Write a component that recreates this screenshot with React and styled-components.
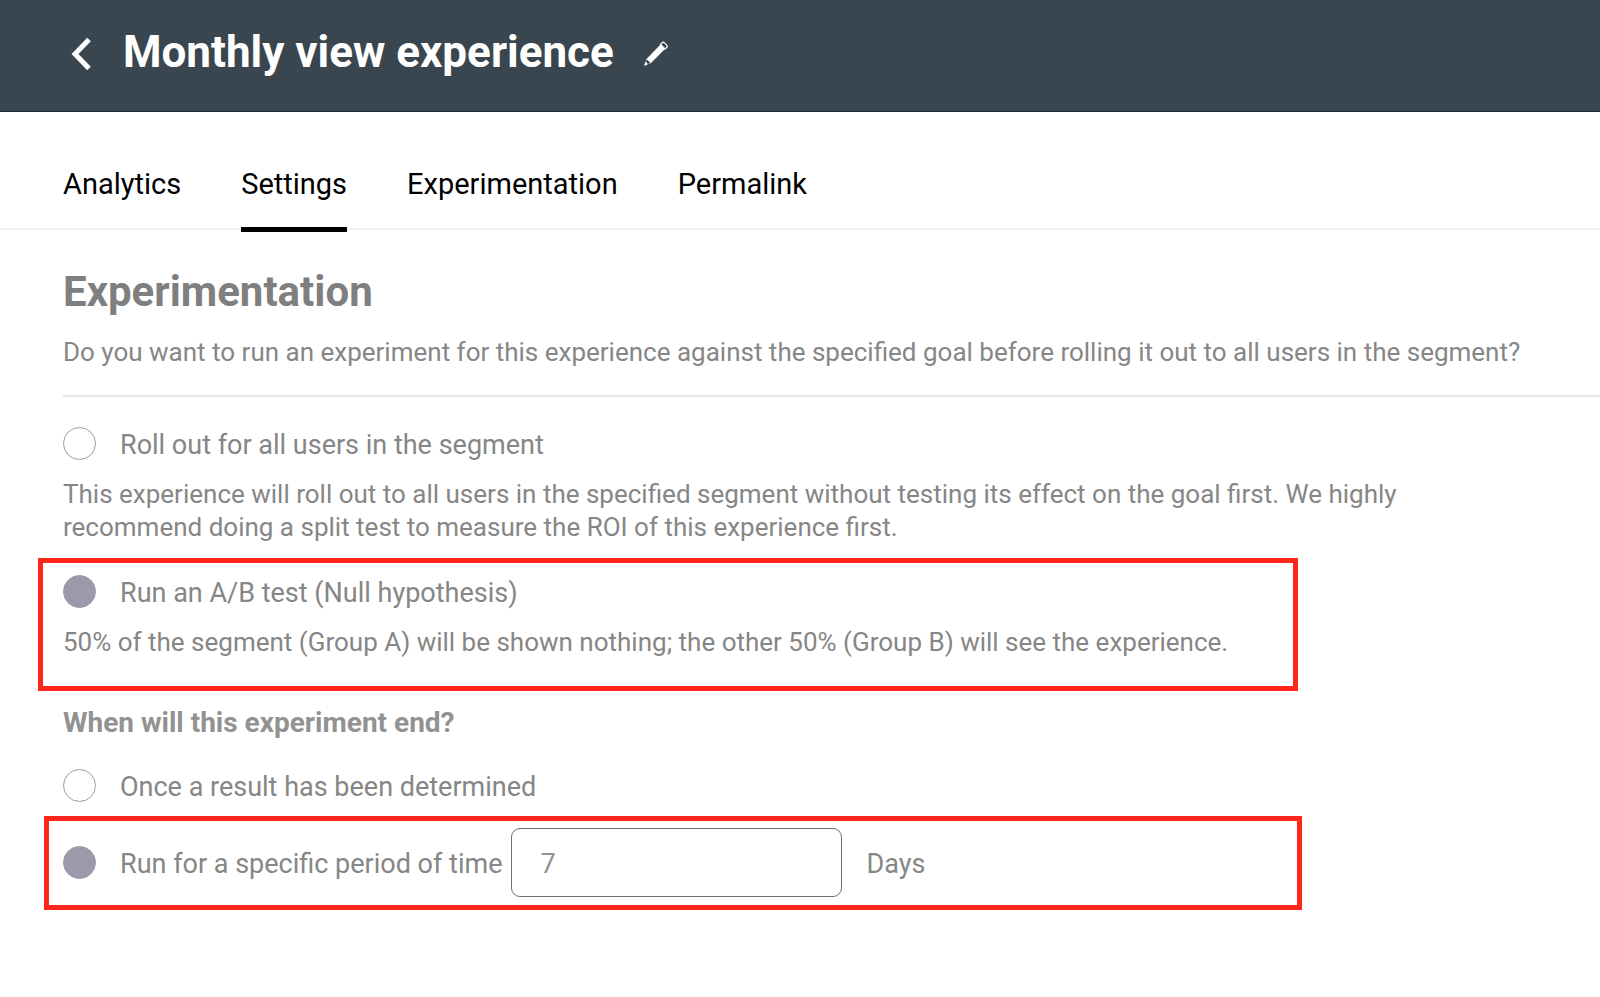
import React, { useState } from "react"
import styled, { createGlobalStyle } from "styled-components"

const color = {
  header: "#39464f",
  headerEdge: "#132d3a",
  text: "#868686",
  heading: "#7f7f7f",
  subheading: "#929292",
  radio: "#9d98aa",
  highlight: "#ff261b",
  line: "#e6e6e6",
}

const GlobalStyle = createGlobalStyle`
  * {
    box-sizing: border-box;
  }

  body {
    margin: 0;
    background: #fff;
    color: ${color.text};
    font-family: Roboto, "Liberation Sans", sans-serif;
    font-size: 26px;
    line-height: 33px;
  }
`

const Header = styled.header`
  display: flex;
  align-items: center;
  height: 112px;
  padding: 0 63px 4px;
  border-bottom: 1px solid ${color.headerEdge};
  background: ${color.header};
  color: #fff;
`

const IconButton = styled.button`
  display: flex;
  padding: 4px;
  border: 0;
  background: none;
  color: inherit;
  cursor: pointer;
`

const Title = styled.h1`
  margin: 0 25px 0 28px;
  padding-bottom: 3px;
  font-size: 44px;
  line-height: 52px;
  font-weight: 700;
`

const Tabs = styled.nav`
  display: flex;
  gap: 60px;
  padding: 50px 63px 0;
  border-bottom: 2px solid #f2f2f2;
`

const Tab = styled.a`
  margin-bottom: -4px;
  padding-bottom: 21px;
  border-bottom: 5px solid ${({ $active }) => ($active ? "#000" : "transparent")};
  color: #000;
  font-size: 29px;
  line-height: 44px;
  text-decoration: none;
`

const Content = styled.main`
  padding: 36px 0 48px 63px;
`

const Intro = styled.div`
  padding-bottom: 26px;
  border-bottom: 2px solid ${color.line};
`

const Heading = styled.h2`
  margin: 0 0 18px;
  color: ${color.heading};
  font-size: 42px;
  line-height: 52px;
`

const Subheading = styled.h3`
  margin: 15px 0 30px;
  color: ${color.subheading};
  font-size: 28px;
  line-height: 33px;
`

const Text = styled.p`
  margin: 0;
`

const Description = styled(Text)`
  max-width: 1360px;
  margin-top: 18px;
`

const Option = styled.label`
  display: flex;
  align-items: center;
  gap: 24px;
  font-size: 27px;
  line-height: 30px;
  cursor: pointer;
`

const OptionText = styled.span`
  padding-top: 3px;
`

const FirstOption = styled(Option)`
  margin-top: 30px;
`

const Radio = styled.input`
  appearance: none;
  flex: none;
  width: 33px;
  height: 33px;
  margin: 0;
  border: 1px solid ${color.radio};
  border-radius: 50%;
  background: #fff;

  &:checked {
    background: ${color.radio};
  }
`

const Highlight = styled.div`
  max-width: 1260px;
  margin: 14px 0 0 -25px;
  padding: 12px 20px 27px;
  border: 5px solid ${color.highlight};
`

const PeriodHighlight = styled(Highlight)`
  display: flex;
  align-items: center;
  max-width: 1258px;
  margin-left: -19px;
  padding: 7px 14px 8px;
`

const DaysInput = styled.input`
  width: 331px;
  height: 69px;
  margin: 0 24px 0 9px;
  padding: 3px 28px 0;
  border: 1px solid #6f6f6f;
  border-radius: 9px;
  background: #fff;
  color: #929292;
  font: inherit;
  font-size: 27px;
`

const Unit = styled.label`
  padding-top: 3px;
  font-size: 27px;
`

const BackIcon = () => (
  <svg width="24" height="32" viewBox="0 0 24 32" fill="none" aria-hidden="true">
    <path d="M22 1.500 8 16l14 14.500" stroke="currentColor" strokeWidth="5" />
  </svg>
)

const PencilIcon = () => (
  <svg width="26" height="26" viewBox="0 0 26 26" aria-hidden="true">
    <path d="m1 25 2.500-7L17.500 3.500l4.500 4.500L8 22z" fill="currentColor" />
    <path d="m17.500 3.500 1.800-1.800q1-.9 2 0l2.600 2.600q.8 1 0 2L22 8z" fill="none" stroke="currentColor" strokeWidth="1.200" />
    <path d="m4 18.500 3.500 3.500-2.500 1-2.200-2.200z" fill={color.header} />
  </svg>
)

const tabs = ["Analytics", "Settings", "Experimentation", "Permalink"]

const App = () => {
  const [rollout, setRollout] = useState("test")
  const [ending, setEnding] = useState("period")
  const [days, setDays] = useState("7")

  return (
    <>
      <GlobalStyle />
      <Header>
        <IconButton aria-label="Back">
          <BackIcon />
        </IconButton>
        <Title>Monthly view experience</Title>
        <IconButton aria-label="Edit name">
          <PencilIcon />
        </IconButton>
      </Header>
      <Tabs>
        {tabs.map((tab) => (
          <Tab key={tab} href={`#${tab.toLowerCase()}`} $active={tab === "Settings"}>
            {tab}
          </Tab>
        ))}
      </Tabs>
      <Content>
        <Intro>
          <Heading>Experimentation</Heading>
          <Text>
            Do you want to run an experiment for this experience against the specified goal before rolling it out to all users in the segment?
          </Text>
        </Intro>
        <FirstOption>
          <Radio type="radio" name="rollout" checked={rollout === "all"} onChange={() => setRollout("all")} />
          <OptionText>Roll out for all users in the segment</OptionText>
        </FirstOption>
        <Description>
          This experience will roll out to all users in the specified segment without testing its effect on the goal first. We highly
          recommend doing a split test to measure the ROI of this experience first.
        </Description>
        <Highlight>
          <Option>
            <Radio type="radio" name="rollout" checked={rollout === "test"} onChange={() => setRollout("test")} />
            <OptionText>Run an A/B test (Null hypothesis)</OptionText>
          </Option>
          <Description>
            50% of the segment (Group A) will be shown nothing; the other 50% (Group B) will see the experience.
          </Description>
        </Highlight>
        <Subheading>When will this experiment end?</Subheading>
        <Option>
          <Radio type="radio" name="ending" checked={ending === "result"} onChange={() => setEnding("result")} />
          <OptionText>Once a result has been determined</OptionText>
        </Option>
        <PeriodHighlight>
          <Option>
            <Radio type="radio" name="ending" checked={ending === "period"} onChange={() => setEnding("period")} />
            <OptionText>Run for a specific period of time</OptionText>
          </Option>
          <DaysInput id="days" value={days} onChange={(e) => setDays(e.target.value)} />
          <Unit htmlFor="days">Days</Unit>
        </PeriodHighlight>
      </Content>
    </>
  )
}

export default App
